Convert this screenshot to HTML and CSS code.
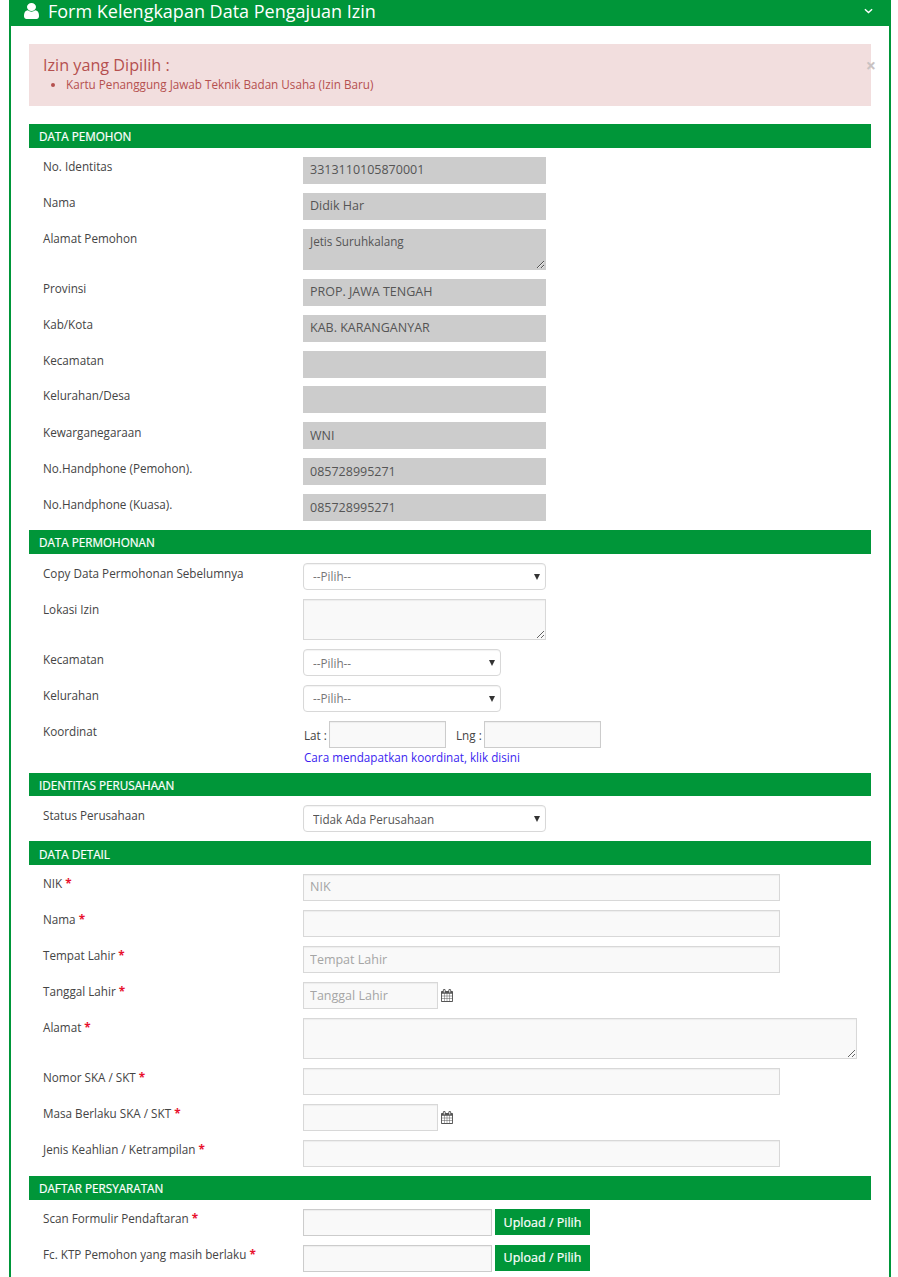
FILE: index.html
```html
<!DOCTYPE html>
<html lang="en">
  <head>
    <meta charset="UTF-8" />
    <meta name="viewport" content="width=device-width, initial-scale=1.0" />
    <title>Form Kelengkapan Data Pengajuan Izin</title>
    <link rel="stylesheet" href="styles.css">
  </head>
  <body>
    <div class="panel">
      <div class="panel-head">
        <svg class="icon-user" viewBox="256 128 1280 1536" preserveAspectRatio="none"><path fill="#fff" d="M1536 1399q0 109-62.5 187t-150.5 78h-854q-88 0-150.5-78t-62.5-187q0-85 8.5-160.5t31.5-152 58.5-131 94-89 134.5-34.5q131 128 313 128t313-128q76 0 134.5 34.5t94 89 58.5 131 31.5 152 8.5 160.5zm-256-887q0 159-112.5 271.5t-271.5 112.5-271.5-112.5-112.5-271.5 112.5-271.5 271.5-112.5 271.5 112.5 112.5 271.5z"/></svg>
        <span class="panel-title">Form Kelengkapan Data Pengajuan Izin</span>
        <svg class="icon-chevron" viewBox="0 0 10 6"><path fill="none" stroke="#fff" stroke-width="1.6" d="M1 1l4 3.6L9 1"/></svg>
      </div>
      <div class="panel-body">
        <div class="alert">
          <span class="close">×</span>
          <div class="alert-title">Izin yang Dipilih :</div>
          <ul>
            <li>Kartu Penanggung Jawab Teknik Badan Usaha (Izin Baru)</li>
          </ul>
        </div>

        <div class="bar">DATA PEMOHON</div>
        <div class="section">
          <div class="row"><label>No. Identitas</label><input class="locked w-md" type="text" value="3313110105870001" readonly /></div>
          <div class="row"><label>Nama</label><input class="locked w-md" type="text" value="Didik Har" readonly /></div>
          <div class="row"><label>Alamat Pemohon</label><textarea class="locked w-md" readonly>Jetis Suruhkalang</textarea></div>
          <div class="row"><label>Provinsi</label><input class="locked w-md" type="text" value="PROP. JAWA TENGAH" readonly /></div>
          <div class="row"><label>Kab/Kota</label><input class="locked w-md" type="text" value="KAB. KARANGANYAR" readonly /></div>
          <div class="row row-tight"><label>Kecamatan</label><input class="locked w-md" type="text" readonly /></div>
          <div class="row"><label>Kelurahan/Desa</label><input class="locked w-md" type="text" readonly /></div>
          <div class="row row-low"><label>Kewarganegaraan</label><input class="locked w-md low" type="text" value="WNI" readonly /></div>
          <div class="row row-low"><label>No.Handphone (Pemohon).</label><input class="locked w-md low" type="text" value="085728995271" readonly /></div>
          <div class="row row-low"><label>No.Handphone (Kuasa).</label><input class="locked w-md low" type="text" value="085728995271" readonly /></div>
        </div>

        <div class="bar">DATA PERMOHONAN</div>
        <div class="section">
          <div class="row row-low"><label>Copy Data Permohonan Sebelumnya</label><select class="w-md"><option>--Pilih--</option></select></div>
          <div class="row row-low"><label>Lokasi Izin</label><textarea class="w-md"></textarea></div>
          <div class="row row-low"><label>Kecamatan</label><select class="w-sel sel-low"><option>--Pilih--</option></select></div>
          <div class="row row-low"><label>Kelurahan</label><select class="w-sel"><option>--Pilih--</option></select></div>
          <div class="row row-low row-coord">
            <label>Koordinat</label>
            <div>
              <div class="coord">
                <span class="coord-lat">Lat :</span><input class="w-coord" type="text" />
                <span class="coord-lng">Lng :</span><input class="w-coord" type="text" />
              </div>
              <a class="coord-link" href="#">Cara mendapatkan koordinat, klik disini</a>
            </div>
          </div>
        </div>

        <div class="bar bar-short">IDENTITAS PERUSAHAAN</div>
        <div class="section">
          <div class="row row-low"><label>Status Perusahaan</label><select class="w-md sel-low sel-dark"><option>Tidak Ada Perusahaan</option></select></div>
        </div>

        <div class="bar bar-low">DATA DETAIL</div>
        <div class="section">
          <div class="row"><label>NIK <b>*</b></label><input class="w-lg" type="text" placeholder="NIK" /></div>
          <div class="row"><label>Nama <b>*</b></label><input class="w-lg" type="text" /></div>
          <div class="row"><label>Tempat Lahir <b>*</b></label><input class="w-lg low" type="text" placeholder="Tempat Lahir" /></div>
          <div class="row">
            <label>Tanggal Lahir <b>*</b></label>
            <div class="date"><input class="w-date low" type="text" placeholder="Tanggal Lahir" />
              <svg class="icon-cal" viewBox="0 0 1664 1792"><path d="M128 1664h288v-288h-288v288zm352 0h320v-288h-320v288zm-352-352h288v-320h-288v320zm352 0h320v-320h-320v320zm-352-384h288v-288h-288v288zm736 736h320v-288h-320v288zm-384-736h320v-288h-320v288zm768 736h288v-288h-288v288zm-384-352h320v-320h-320v320zm-352-864v-288q0-13-9.5-22.5t-22.5-9.5h-64q-13 0-22.5 9.5t-9.5 22.5v288q0 13 9.5 22.5t22.5 9.5h64q13 0 22.5-9.5t9.5-22.5zm736 864h288v-320h-288v320zm-384-384h320v-288h-320v288zm384 0h288v-288h-288v288zm32-480v-288q0-13-9.5-22.5t-22.5-9.5h-64q-13 0-22.5 9.5t-9.5 22.5v288q0 13 9.5 22.5t22.5 9.5h64q13 0 22.5-9.5t9.5-22.5zm384-64v1280q0 52-38 90t-90 38h-1408q-52 0-90-38t-38-90v-1280q0-52 38-90t90-38h128v-96q0-66 47-113t113-47h64q66 0 113 47t47 113v96h384v-96q0-66 47-113t113-47h64q66 0 113 47t47 113v96h128q52 0 90 38t38 90z"/></svg>
            </div>
          </div>
          <div class="row"><label>Alamat <b>*</b></label><textarea class="w-full"></textarea></div>
          <div class="row"><label>Nomor SKA / SKT <b>*</b></label><input class="w-lg" type="text" /></div>
          <div class="row">
            <label>Masa Berlaku SKA / SKT <b>*</b></label>
            <div class="date"><input class="w-date" type="text" />
              <svg class="icon-cal" viewBox="0 0 1664 1792"><path d="M128 1664h288v-288h-288v288zm352 0h320v-288h-320v288zm-352-352h288v-320h-288v320zm352 0h320v-320h-320v320zm-352-384h288v-288h-288v288zm736 736h320v-288h-320v288zm-384-736h320v-288h-320v288zm768 736h288v-288h-288v288zm-384-352h320v-320h-320v320zm-352-864v-288q0-13-9.5-22.5t-22.5-9.5h-64q-13 0-22.5 9.5t-9.5 22.5v288q0 13 9.5 22.5t22.5 9.5h64q13 0 22.5-9.5t9.5-22.5zm736 864h288v-320h-288v320zm-384-384h320v-288h-320v288zm384 0h288v-288h-288v288zm32-480v-288q0-13-9.5-22.5t-22.5-9.5h-64q-13 0-22.5 9.5t-9.5 22.5v288q0 13 9.5 22.5t22.5 9.5h64q13 0 22.5-9.5t9.5-22.5zm384-64v1280q0 52-38 90t-90 38h-1408q-52 0-90-38t-38-90v-1280q0-52 38-90t90-38h128v-96q0-66 47-113t113-47h64q66 0 113 47t47 113v96h384v-96q0-66 47-113t113-47h64q66 0 113 47t47 113v96h128q52 0 90 38t38 90z"/></svg>
            </div>
          </div>
          <div class="row"><label>Jenis Keahlian / Ketrampilan <b>*</b></label><input class="w-lg" type="text" /></div>
        </div>

        <div class="bar">DAFTAR PERSYARATAN</div>
        <div class="section">
          <div class="row"><label>Scan Formulir Pendaftaran <b>*</b></label><div class="upload"><input class="w-file" type="text" /><button type="button">Upload / Pilih</button></div></div>
          <div class="row"><label>Fc. KTP Pemohon yang masih berlaku <b>*</b></label><div class="upload"><input class="w-file" type="text" /><button class="btn-up" type="button">Upload / Pilih</button></div></div>
        </div>
      </div>
    </div>
  </body>
</html>
```

FILE: styles.css
```css
html,
body {
  height: 1277px;
  overflow: hidden;
}
body {
  margin: 0;
  background: #fff;
  font-family: "Open Sans", sans-serif;
  font-size: 11.7px;
  color: #444;
}

/* panel */
.panel {
  width: 882px;
  margin-left: 9px;
  box-sizing: border-box;
  height: 1277px;
  border: solid #009639;
  border-width: 0 2px;
}
.panel-head {
  display: flex;
  align-items: center;
  height: 26px;
  margin: 0 -2px;
  padding: 0 18px 0 15px;
  background: #009639;
  color: #fff;
}
.panel-title {
  flex: 1;
  margin: 0 0 4px 9px;
  font-size: 18px;
  line-height: 22px;
}
.icon-user {
  width: 15px;
  height: 16px;
  margin-bottom: 4px;
}
.icon-chevron {
  width: 9px;
  height: 6px;
  margin-bottom: 4px;
}
.panel-body {
  padding: 18px 18px 0;
}

/* alert */
.alert {
  position: relative;
  height: 62px;
  box-sizing: border-box;
  margin-bottom: 18px;
  padding: 11px 14px 0;
  background: #f2dede;
  color: #b5504f;
}
.alert-title {
  font-size: 16.2px;
  line-height: 20px;
}
.alert ul {
  margin: 0;
  padding-left: 23px;
  line-height: 18px;
}
.close {
  position: absolute;
  top: 9px;
  right: -5px;
  font-size: 18px;
  line-height: 24px;
  font-weight: 700;
  color: #c9c2c2;
}

/* section bars */
.bar {
  height: 24px;
  padding-left: 10px;
  background: #009639;
  color: #fff;
  font-size: 11.7px;
  line-height: 25px;
  -webkit-text-stroke: 0.2px #fff;
}
.bar-short {
  height: 23px;
}
.bar-low {
  line-height: 27px;
}
.section {
  padding: 9px 14px 0;
}
.row {
  display: grid;
  grid-template-columns: 260px auto;
  justify-content: start;
  align-items: start;
  margin-bottom: 9px;
}
.row-tight {
  margin-bottom: 8px;
}
.row label {
  line-height: 18px;
}
.row-low label {
  line-height: 20px;
}
.row label b {
  color: #e8112d;
  font-weight: 700;
}
.row-coord {
  margin-bottom: 7px;
}

/* fields */
input,
textarea,
select {
  display: block;
  box-sizing: border-box;
  height: 27px;
  margin: 0;
  padding: 0 6px 2px;
  border: 1px solid #d8d8d8;
  border-radius: 0;
  background: #f9f9f9;
  box-shadow: inset 0 1px 1px rgba(0, 0, 0, 0.05);
  font-family: "Open Sans", sans-serif;
  font-size: 12.5px;
  color: #555;
  outline: none;
}
input.low {
  padding-bottom: 0;
}
textarea {
  height: 41px;
  padding: 3px 6px;
  font-size: 11.7px;
}
input::placeholder {
  color: #a5a5a5;
}
select {
  appearance: none;
  border-radius: 4px;
  padding: 0 9px 1px;
  background: #fff url("data:image/svg+xml,%3Csvg xmlns='http://www.w3.org/2000/svg' width='6' height='7'%3E%3Cpath fill='%23333' d='M0 1h6L3 7z'/%3E%3C/svg%3E") no-repeat right 5px center;
  font-size: 11.7px;
  color: #777;
}
select.sel-low {
  padding: 1px 9px 0;
}
.sel-dark {
  color: #555;
}
.locked {
  border-color: #ccc;
  background: #ccc;
  box-shadow: none;
}
.w-md { width: 243px; }
.w-sel { width: 198px; }
.w-lg { width: 477px; }
.w-date { width: 135px; }
.w-full { width: 554px; }
.w-file { width: 189px; border-color: #ccc; }
.w-coord { width: 117px; border-color: #ccc; }

.coord {
  display: flex;
  align-items: center;
}
.coord-lat {
  box-sizing: border-box;
  width: 26px;
  padding-left: 1px;
}
.coord-lng {
  width: 25px;
  margin: 0 3px 0 10px;
  white-space: nowrap;
}
.coord-link {
  display: block;
  margin-left: 1px;
  line-height: 18px;
  color: #3c1ff0;
  text-decoration: none;
}
.date {
  display: flex;
  align-items: center;
}
.icon-cal {
  width: 12px;
  height: 13px;
  margin-left: 3px;
  fill: #555;
}
.upload {
  display: flex;
  gap: 3px;
}
.upload button {
  width: 95px;
  height: 26px;
  padding: 0;
  border: none;
  background: #009639;
  color: #fff;
  font-family: "Open Sans", sans-serif;
  font-size: 12.5px;
  -webkit-text-stroke: 0.2px #fff;
}
.upload .btn-up {
  padding-bottom: 2px;
}
```
